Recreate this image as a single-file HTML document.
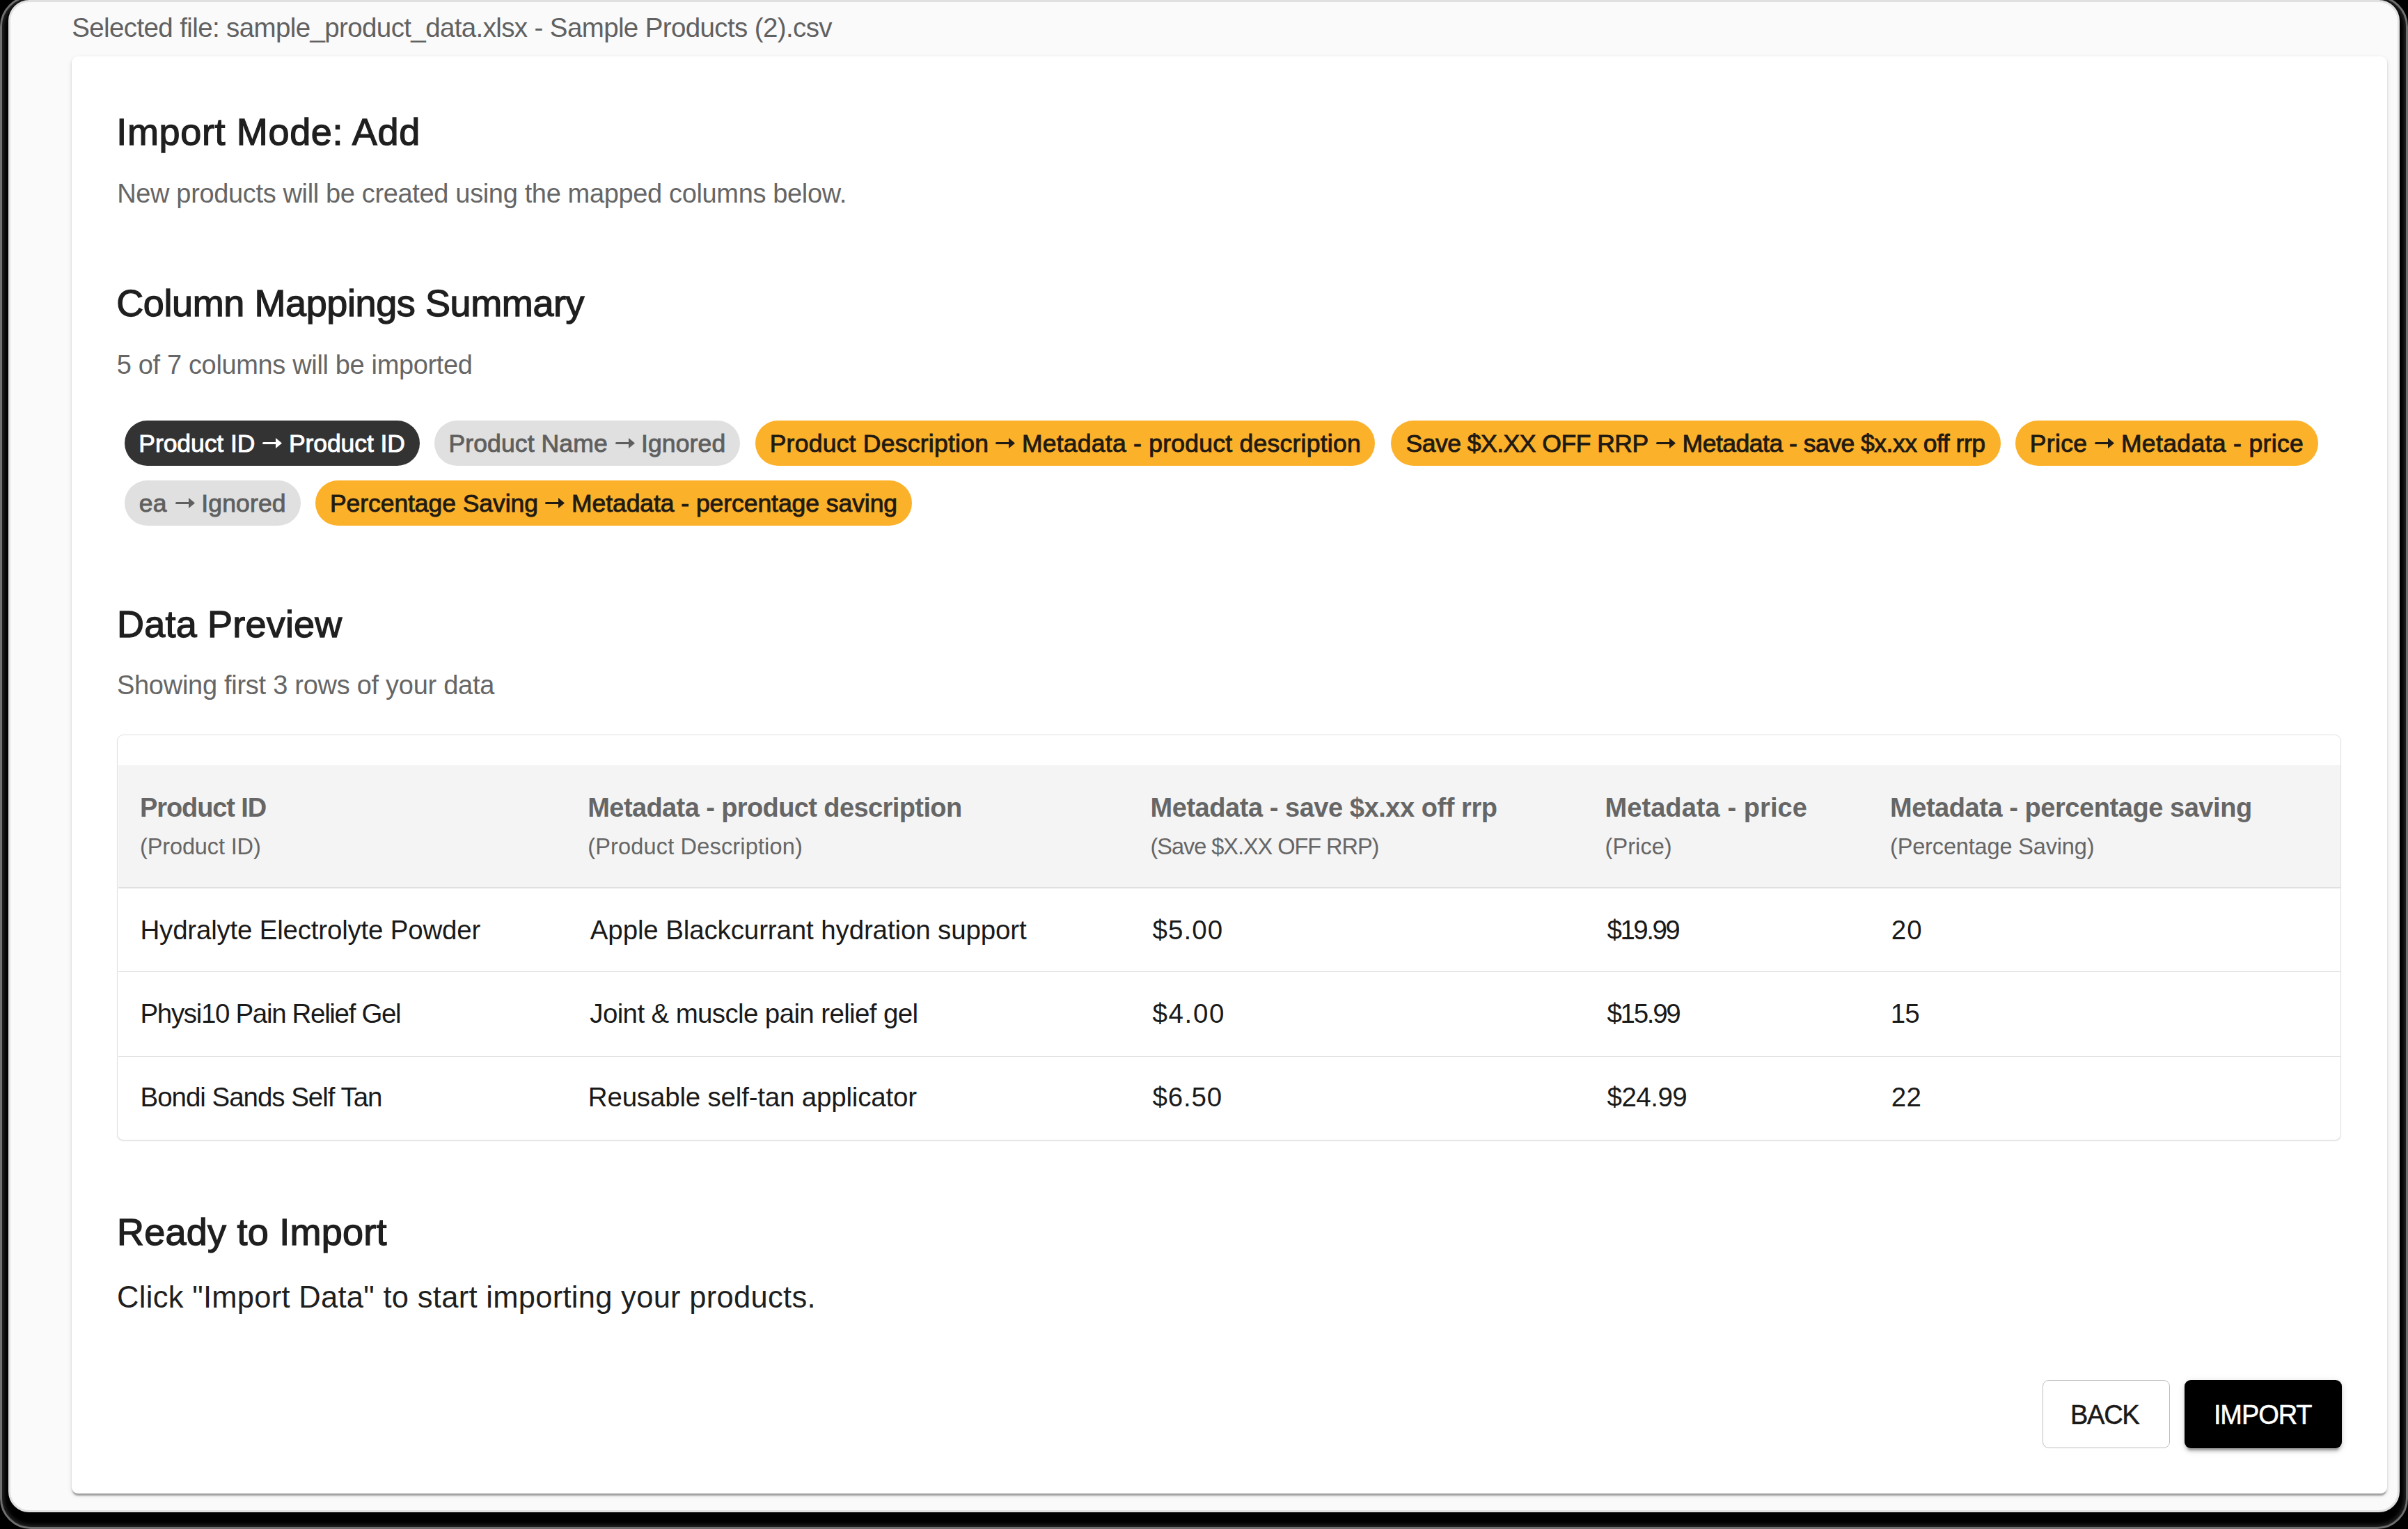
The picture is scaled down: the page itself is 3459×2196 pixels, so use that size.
<!DOCTYPE html>
<html><head><meta charset="utf-8"><title>Import Summary</title>
<style>
html,body{margin:0;padding:0;}
body{width:3459px;height:2196px;overflow:hidden;background:#000;position:relative;font-family:"Liberation Sans",sans-serif;}
.shade{position:absolute;left:0;top:-6px;width:3458.5px;height:2201.5px;box-sizing:border-box;border:3.5px solid #6e6e6e;border-radius:44px;
  box-shadow:inset 0 0 6px 2px rgba(90,90,90,.5);}
.win{position:absolute;left:12px;top:0px;width:3435px;height:2172px;box-sizing:border-box;border:3px solid #e0e0e0;border-radius:30px;background:#fafafa;}
.card{position:absolute;left:103px;top:81px;width:3326px;height:2064px;background:#fff;border-radius:9px;
  box-shadow:0 4.4px 2.2px -2.2px rgba(0,0,0,.2),0 2.2px 2.2px 0 rgba(0,0,0,.14),0 2.2px 6.6px 0 rgba(0,0,0,.12);}
.t{position:absolute;white-space:pre;}
.arr{display:inline-block;}
.chip{position:absolute;border-radius:40px;}
.tbl{position:absolute;box-sizing:border-box;border:1.5px solid #e0e0e0;border-radius:9px;background:#fff;
  box-shadow:0 1.5px 1px -0.5px rgba(0,0,0,.09);}
.hdr{position:absolute;background:#f4f4f4;}
.rule{position:absolute;height:1.5px;background:#e0e0e0;}
.btn{position:absolute;box-sizing:border-box;border-radius:9px;}
.back{border:1.5px solid #bdbdbd;background:#fff;}
.imp{background:#000;box-shadow:0 6.6px 2.2px -4.4px rgba(0,0,0,.2),0 4.4px 4.4px 0 rgba(0,0,0,.14),0 2.2px 11px 0 rgba(0,0,0,.12);}
</style></head>
<body>
<div class="shade"></div>
<div class="win"></div>
<div class="card"></div>
<div class="t" style="left:103.25px;top:21.05px;font-size:38.5px;line-height:38.5px;letter-spacing:-0.620px;color:#616161;font-weight:normal;">Selected file: sample_product_data.xlsx - Sample Products (2).csv</div>
<div class="t" style="left:167.30px;top:162.00px;font-size:54.0px;line-height:54.0px;letter-spacing:0.643px;color:#1f1f1f;font-weight:normal;-webkit-text-stroke:1.3px #1f1f1f;">Import Mode: Add</div>
<div class="t" style="left:168.20px;top:258.70px;font-size:38.0px;line-height:38.0px;letter-spacing:-0.351px;color:#666666;font-weight:normal;">New products will be created using the mapped columns below.</div>
<div class="t" style="left:167.25px;top:408.20px;font-size:54.0px;line-height:54.0px;letter-spacing:-0.405px;color:#1f1f1f;font-weight:normal;-webkit-text-stroke:1.3px #1f1f1f;">Column Mappings Summary</div>
<div class="t" style="left:167.80px;top:504.70px;font-size:38.0px;line-height:38.0px;letter-spacing:-0.352px;color:#666666;font-weight:normal;">5 of 7 columns will be imported</div>
<div class="chip" style="left:178.5px;top:604.4px;width:424.2px;height:64.5px;background:#333333"></div>
<div class="t" style="left:199.35px;top:619.85px;font-size:35.5px;line-height:35.5px;letter-spacing:-0.078px;color:#ffffff;-webkit-text-stroke:0.9px #ffffff;">Product ID<svg class="arr" width="28" height="15" viewBox="0 0 28 15" style="margin-left:10.87px;margin-right:9.75px;vertical-align:5.00px"><path d="M1.6 5.9H19.5V9.1H1.6A1.6 1.6 0 0 1 1.6 5.9Z" fill="#ffffff"/><path d="M19 0L28 7.5L19 15Z" fill="#ffffff"/></svg>Product ID</div>
<div class="chip" style="left:623.9px;top:604.4px;width:439.5px;height:64.5px;background:#e0e0e0"></div>
<div class="t" style="left:644.45px;top:619.85px;font-size:35.5px;line-height:35.5px;letter-spacing:0.121px;color:#5f5f5f;-webkit-text-stroke:0.9px #5f5f5f;">Product Name<svg class="arr" width="28" height="15" viewBox="0 0 28 15" style="margin-left:10.98px;margin-right:9.25px;vertical-align:5.00px"><path d="M1.6 5.9H19.5V9.1H1.6A1.6 1.6 0 0 1 1.6 5.9Z" fill="#5f5f5f"/><path d="M19 0L28 7.5L19 15Z" fill="#5f5f5f"/></svg>Ignored</div>
<div class="chip" style="left:1084.8px;top:604.4px;width:890.1px;height:64.5px;background:#fcb12b"></div>
<div class="t" style="left:1105.65px;top:619.85px;font-size:35.5px;line-height:35.5px;letter-spacing:0.250px;color:#1f1a12;-webkit-text-stroke:0.9px #1f1a12;">Product Description<svg class="arr" width="28" height="15" viewBox="0 0 28 15" style="margin-left:9.98px;margin-right:9.75px;vertical-align:5.00px"><path d="M1.6 5.9H19.5V9.1H1.6A1.6 1.6 0 0 1 1.6 5.9Z" fill="#1f1a12"/><path d="M19 0L28 7.5L19 15Z" fill="#1f1a12"/></svg>Metadata - product description</div>
<div class="chip" style="left:1998.3px;top:604.4px;width:875.3px;height:64.5px;background:#fcb12b"></div>
<div class="t" style="left:2019.50px;top:619.85px;font-size:35.5px;line-height:35.5px;letter-spacing:-0.494px;color:#1f1a12;-webkit-text-stroke:0.9px #1f1a12;">Save $X.XX OFF RRP<svg class="arr" width="28" height="15" viewBox="0 0 28 15" style="margin-left:11.16px;margin-right:9.75px;vertical-align:5.00px"><path d="M1.6 5.9H19.5V9.1H1.6A1.6 1.6 0 0 1 1.6 5.9Z" fill="#1f1a12"/><path d="M19 0L28 7.5L19 15Z" fill="#1f1a12"/></svg>Metadata - save $x.xx off rrp</div>
<div class="chip" style="left:2895.2px;top:604.4px;width:434.4px;height:64.5px;background:#fcb12b"></div>
<div class="t" style="left:2915.75px;top:619.85px;font-size:35.5px;line-height:35.5px;letter-spacing:0.358px;color:#1f1a12;-webkit-text-stroke:0.9px #1f1a12;">Price<svg class="arr" width="28" height="15" viewBox="0 0 28 15" style="margin-left:10.76px;margin-right:9.75px;vertical-align:5.00px"><path d="M1.6 5.9H19.5V9.1H1.6A1.6 1.6 0 0 1 1.6 5.9Z" fill="#1f1a12"/><path d="M19 0L28 7.5L19 15Z" fill="#1f1a12"/></svg>Metadata - price</div>
<div class="chip" style="left:178.7px;top:690.4px;width:252.9px;height:64.5px;background:#e0e0e0"></div>
<div class="t" style="left:199.80px;top:705.85px;font-size:35.5px;line-height:35.5px;letter-spacing:0.157px;color:#5f5f5f;-webkit-text-stroke:0.9px #5f5f5f;">ea<svg class="arr" width="28" height="15" viewBox="0 0 28 15" style="margin-left:12.36px;margin-right:9.25px;vertical-align:5.00px"><path d="M1.6 5.9H19.5V9.1H1.6A1.6 1.6 0 0 1 1.6 5.9Z" fill="#5f5f5f"/><path d="M19 0L28 7.5L19 15Z" fill="#5f5f5f"/></svg>Ignored</div>
<div class="chip" style="left:453px;top:690.4px;width:857.2px;height:64.5px;background:#fcb12b"></div>
<div class="t" style="left:473.95px;top:705.85px;font-size:35.5px;line-height:35.5px;letter-spacing:-0.059px;color:#1f1a12;-webkit-text-stroke:0.9px #1f1a12;">Percentage Saving<svg class="arr" width="28" height="15" viewBox="0 0 28 15" style="margin-left:10.34px;margin-right:9.75px;vertical-align:5.00px"><path d="M1.6 5.9H19.5V9.1H1.6A1.6 1.6 0 0 1 1.6 5.9Z" fill="#1f1a12"/><path d="M19 0L28 7.5L19 15Z" fill="#1f1a12"/></svg>Metadata - percentage saving</div>
<div class="t" style="left:168.05px;top:868.50px;font-size:54.0px;line-height:54.0px;letter-spacing:0.195px;color:#1f1f1f;font-weight:normal;-webkit-text-stroke:1.3px #1f1f1f;">Data Preview</div>
<div class="t" style="left:167.95px;top:965.20px;font-size:38.0px;line-height:38.0px;letter-spacing:-0.277px;color:#666666;font-weight:normal;">Showing first 3 rows of your data</div>
<div class="tbl" style="left:168.3px;top:1055px;width:3195.0px;height:583.3px"></div>
<div class="hdr" style="left:169.8px;top:1099.3px;width:3192.0px;height:175.0px"></div>
<div class="rule" style="left:169.8px;top:1274.3px;width:3192.0px"></div>
<div class="rule" style="left:169.8px;top:1394.8px;width:3192.0px"></div>
<div class="rule" style="left:169.8px;top:1516.5px;width:3192.0px"></div>
<div class="t" style="left:201.00px;top:1140.60px;font-size:38.0px;line-height:38.0px;letter-spacing:-1.106px;color:#666666;font-weight:bold;">Product ID</div>
<div class="t" style="left:201.00px;top:1199.75px;font-size:32.5px;line-height:32.5px;letter-spacing:-0.127px;color:#666666;font-weight:normal;">(Product ID)</div>
<div class="t" style="left:844.30px;top:1140.60px;font-size:38.0px;line-height:38.0px;letter-spacing:-0.600px;color:#666666;font-weight:bold;">Metadata - product description</div>
<div class="t" style="left:844.30px;top:1199.75px;font-size:32.5px;line-height:32.5px;letter-spacing:0.163px;color:#666666;font-weight:normal;">(Product Description)</div>
<div class="t" style="left:1652.50px;top:1140.60px;font-size:38.0px;line-height:38.0px;letter-spacing:-0.452px;color:#666666;font-weight:bold;">Metadata - save $x.xx off rrp</div>
<div class="t" style="left:1652.50px;top:1199.75px;font-size:32.5px;line-height:32.5px;letter-spacing:-1.032px;color:#666666;font-weight:normal;">(Save $X.XX OFF RRP)</div>
<div class="t" style="left:2305.50px;top:1140.60px;font-size:38.0px;line-height:38.0px;letter-spacing:0.070px;color:#666666;font-weight:bold;">Metadata - price</div>
<div class="t" style="left:2305.50px;top:1199.75px;font-size:32.5px;line-height:32.5px;letter-spacing:0.083px;color:#666666;font-weight:normal;">(Price)</div>
<div class="t" style="left:2715.00px;top:1140.60px;font-size:38.0px;line-height:38.0px;letter-spacing:-0.446px;color:#666666;font-weight:bold;">Metadata - percentage saving</div>
<div class="t" style="left:2715.00px;top:1199.75px;font-size:32.5px;line-height:32.5px;letter-spacing:-0.153px;color:#666666;font-weight:normal;">(Percentage Saving)</div>
<div class="t" style="left:201.50px;top:1317.15px;font-size:38.5px;line-height:38.5px;letter-spacing:-0.202px;color:#1a1a1a;font-weight:normal;">Hydralyte Electrolyte Powder</div>
<div class="t" style="left:847.80px;top:1317.15px;font-size:38.5px;line-height:38.5px;letter-spacing:-0.126px;color:#1a1a1a;font-weight:normal;">Apple Blackcurrant hydration support</div>
<div class="t" style="left:1655.50px;top:1317.15px;font-size:38.5px;line-height:38.5px;letter-spacing:1.075px;color:#1a1a1a;font-weight:normal;">$5.00</div>
<div class="t" style="left:2308.50px;top:1317.15px;font-size:38.5px;line-height:38.5px;letter-spacing:-2.500px;color:#1a1a1a;font-weight:normal;">$19.99</div>
<div class="t" style="left:2716.75px;top:1317.15px;font-size:38.5px;line-height:38.5px;letter-spacing:1.000px;color:#1a1a1a;font-weight:normal;">20</div>
<div class="t" style="left:201.50px;top:1437.05px;font-size:38.5px;line-height:38.5px;letter-spacing:-1.332px;color:#1a1a1a;font-weight:normal;">Physi10 Pain Relief Gel</div>
<div class="t" style="left:847.30px;top:1437.05px;font-size:38.5px;line-height:38.5px;letter-spacing:-0.631px;color:#1a1a1a;font-weight:normal;">Joint &amp; muscle pain relief gel</div>
<div class="t" style="left:1655.50px;top:1437.05px;font-size:38.5px;line-height:38.5px;letter-spacing:1.625px;color:#1a1a1a;font-weight:normal;">$4.00</div>
<div class="t" style="left:2308.50px;top:1437.05px;font-size:38.5px;line-height:38.5px;letter-spacing:-2.300px;color:#1a1a1a;font-weight:normal;">$15.99</div>
<div class="t" style="left:2715.75px;top:1437.05px;font-size:38.5px;line-height:38.5px;letter-spacing:-1.000px;color:#1a1a1a;font-weight:normal;">15</div>
<div class="t" style="left:201.50px;top:1557.05px;font-size:38.5px;line-height:38.5px;letter-spacing:-1.026px;color:#1a1a1a;font-weight:normal;">Bondi Sands Self Tan</div>
<div class="t" style="left:844.80px;top:1557.05px;font-size:38.5px;line-height:38.5px;letter-spacing:-0.187px;color:#1a1a1a;font-weight:normal;">Reusable self-tan applicator</div>
<div class="t" style="left:1655.50px;top:1557.05px;font-size:38.5px;line-height:38.5px;letter-spacing:0.850px;color:#1a1a1a;font-weight:normal;">$6.50</div>
<div class="t" style="left:2308.50px;top:1557.05px;font-size:38.5px;line-height:38.5px;letter-spacing:-0.500px;color:#1a1a1a;font-weight:normal;">$24.99</div>
<div class="t" style="left:2716.75px;top:1557.05px;font-size:38.5px;line-height:38.5px;letter-spacing:0.250px;color:#1a1a1a;font-weight:normal;">22</div>
<div class="t" style="left:168.05px;top:1741.80px;font-size:54.0px;line-height:54.0px;letter-spacing:0.232px;color:#1f1f1f;font-weight:normal;-webkit-text-stroke:1.3px #1f1f1f;">Ready to Import</div>
<div class="t" style="left:168.05px;top:1842.25px;font-size:43.5px;line-height:43.5px;letter-spacing:0.294px;color:#1f1f1f;font-weight:normal;">Click &quot;Import Data&quot; to start importing your products.</div>
<div class="btn back" style="left:2934.3px;top:1981.6px;width:182.7px;height:98.8px"></div>
<div class="t" style="left:2974.00px;top:2012.90px;font-size:38.0px;line-height:38.0px;letter-spacing:-1.283px;color:#1a1a1a;font-weight:normal;-webkit-text-stroke:0.5px #1a1a1a;">BACK</div>
<div class="btn imp" style="left:3138.2px;top:1981.6px;width:226.3px;height:98.8px"></div>
<div class="t" style="left:3179.90px;top:2012.90px;font-size:38.0px;line-height:38.0px;letter-spacing:-1.080px;color:#ffffff;font-weight:normal;-webkit-text-stroke:0.5px #ffffff;">IMPORT</div>
</body></html>
